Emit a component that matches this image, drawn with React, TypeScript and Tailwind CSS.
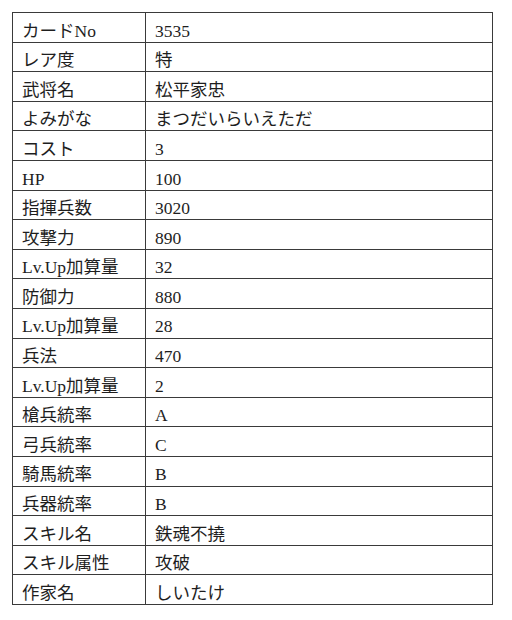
const rows: [string, string][] = [
  ['カードNo', '3535'],
  ['レア度', '特'],
  ['武将名', '松平家忠'],
  ['よみがな', 'まつだいらいえただ'],
  ['コスト', '3'],
  ['HP', '100'],
  ['指揮兵数', '3020'],
  ['攻撃力', '890'],
  ['Lv.Up加算量', '32'],
  ['防御力', '880'],
  ['Lv.Up加算量', '28'],
  ['兵法', '470'],
  ['Lv.Up加算量', '2'],
  ['槍兵統率', 'A'],
  ['弓兵統率', 'C'],
  ['騎馬統率', 'B'],
  ['兵器統率', 'B'],
  ['スキル名', '鉄魂不撓'],
  ['スキル属性', '攻破'],
  ['作家名', 'しいたけ'],
];

export default function App() {
  return (
    <div className="min-h-[620px] w-[512px] bg-white pl-[12px] pt-[12px]">
      <table
        className="w-[481px] border-collapse text-[17.5px] leading-none text-[#1e1e1e]"
        style={{ fontFamily: '"Liberation Serif", "Noto Sans CJK JP", serif' }}
      >
        <tbody>
          {rows.map(([label, value], i) => (
            <tr key={i} className="h-[29.6px]">
              <td className="w-[133px] border border-[#3a3a3a] pl-[9px] pt-[8px] align-middle">
                {label}
              </td>
              <td className="border border-[#3a3a3a] pl-[9px] pt-[8px] align-middle">
                {value}
              </td>
            </tr>
          ))}
        </tbody>
      </table>
    </div>
  );
}
